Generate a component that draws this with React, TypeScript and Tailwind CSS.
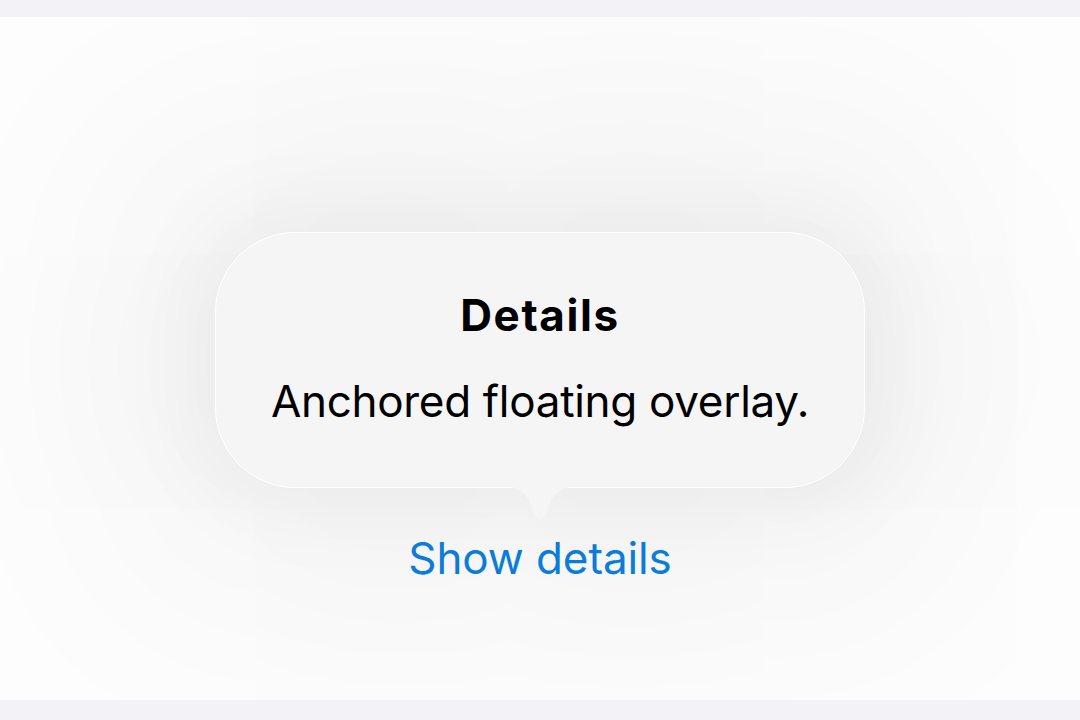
export default function App() {
  return (
    <div
      className="flex h-[720px] w-[1080px] flex-col bg-[#f2f2f7]"
      style={{ fontFamily: "Inter, 'Noto Sans', sans-serif" }}
    >
      <div className="h-[17px] shrink-0" />
      <main className="flex flex-1 flex-col items-center overflow-hidden bg-[#fdfdfd] pt-[215px]">
        <div className="relative flex flex-col items-center">
          {/* Popover card */}
          <div className="flex h-[256px] w-[650px] flex-col items-center rounded-[80px] border border-white bg-[#f5f5f5] pt-[58px] shadow-[0_0_80px_30px_rgba(0,0,0,0.04),0_0_300px_110px_rgba(0,0,0,0.05)]">
            <h2 className="text-[44px] font-bold leading-[48px] tracking-[1.6px] text-black">
              Details
            </h2>
            <p className="mt-[38px] text-[44px] leading-[48px] tracking-[-0.3px] text-black">
              Anchored floating overlay.
            </p>
          </div>
          {/* Pointer arrow */}
          <svg
            width="84"
            height="36"
            viewBox="0 0 84 36"
            className="-mt-[2px] block"
          >
            <path
              d="M0 0 C 15 0, 22 3, 29 11 L 38 31 Q 42 37 46 31 L 55 11 C 62 3, 69 0, 84 0 Z"
              fill="#f5f5f5"
            />
          </svg>
          <button className="mt-[12px] text-[44px] leading-[48px] tracking-[-0.1px] text-[#0b7cd8]">
            Show details
          </button>
        </div>
      </main>
      <div className="h-[20px] shrink-0" />
    </div>
  );
}
